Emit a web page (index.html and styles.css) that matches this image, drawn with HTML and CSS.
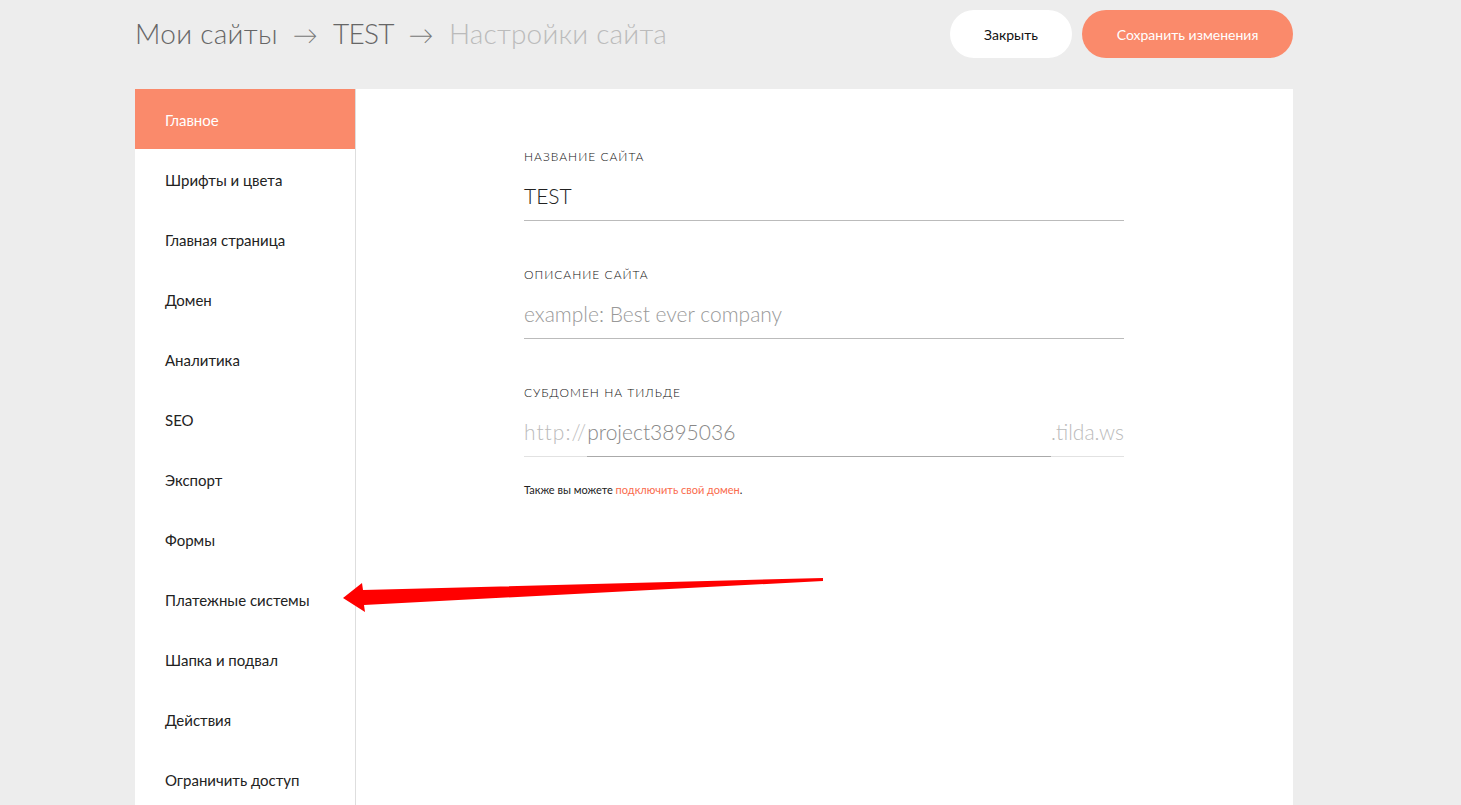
FILE: index.html
```html
<!DOCTYPE html>
<html lang="ru">
<head>
    <meta charset="UTF-8">
    <meta name="viewport" content="width=device-width, initial-scale=1.0">
    <title>Настройки сайта</title>
    <link rel="stylesheet" href="styles.css">
</head>
<body>
    <div class="page">
        <div class="topbar">
            <div class="crumbs">
                <span class="crumb">Мои сайты</span>
                <span class="sep">&rarr;</span>
                <span class="crumb project">TEST</span>
                <span class="sep">&rarr;</span>
                <span class="crumb current">Настройки сайта</span>
            </div>
            <div class="actions">
                <button class="btn btn-light">Закрыть</button>
                <button class="btn btn-accent">Сохранить изменения</button>
            </div>
        </div>

        <div class="panel">
            <ul class="menu">
                <li class="active">Главное</li>
                <li>Шрифты и цвета</li>
                <li>Главная страница</li>
                <li>Домен</li>
                <li>Аналитика</li>
                <li>SEO</li>
                <li>Экспорт</li>
                <li>Формы</li>
                <li>Платежные системы</li>
                <li>Шапка и подвал</li>
                <li>Действия</li>
                <li>Ограничить доступ</li>
            </ul>

            <div class="content">
                <div class="form">
                    <div class="field">
                        <div class="field-label">Название сайта</div>
                        <div class="field-input">TEST</div>
                    </div>
                    <div class="field">
                        <div class="field-label">Описание сайта</div>
                        <div class="field-input placeholder">example: Best ever company</div>
                    </div>
                    <div class="field">
                        <div class="field-label">Субдомен на Тильде</div>
                        <div class="subdomain">
                            <span class="prefix">http://</span>
                            <span class="sub-value">project3895036</span>
                            <span class="suffix">.tilda.ws</span>
                        </div>
                        <div class="note">Также вы можете <a href="#">подключить свой домен</a>.</div>
                    </div>
                </div>
            </div>
        </div>
    </div>

    <svg class="pointer" width="500" height="40" viewBox="0 0 500 40">
        <polygon points="480,0 480,3 21,27 22,34 0,20 19,5 20,12" fill="#ff0000"/>
    </svg>
</body>
</html>
```

FILE: styles.css
```css
body {
    margin: 0;
    background-color: #ededed;
    font-family: "Lato", "Noto Sans", sans-serif;
    color: #222;
}
.page {
    width: 1158px;
    margin-left: 135px;
}
.topbar {
    display: flex;
    justify-content: space-between;
    align-items: center;
    height: 68px;
    margin-bottom: 21px;
}
.crumbs {
    display: flex;
    align-items: baseline;
    font-size: 28px;
    font-weight: 300;
    letter-spacing: 0.3px;
    color: #666;
    gap: 15px;
    margin-top: -3px;
}
.crumbs .project {
    letter-spacing: -0.8px;
}
.crumbs .current {
    color: #bbb;
    letter-spacing: 0.2px;
}
.sep {
    font-size: 25px;
    color: #777;
}
.actions {
    display: flex;
    gap: 10px;
}
.btn {
    height: 48px;
    border: none;
    border-radius: 24px;
    font-family: inherit;
    font-size: 14px;
    cursor: pointer;
}
.btn-light {
    width: 122px;
    background-color: #fff;
    color: #111;
}
.btn-accent {
    width: 211px;
    background-color: #fa8a6b;
    color: #fff;
}
.panel {
    display: flex;
    background-color: #fff;
    min-height: 720px;
}
.menu {
    list-style: none;
    margin: 0;
    padding: 0;
    width: 220px;
    border-right: 1px solid #dedede;
}
.menu li {
    height: 60px;
    line-height: 62px;
    padding-left: 30px;
    font-size: 15px;
    color: #222;
}
.menu li.active {
    background-color: #fa8a6b;
    color: #fff;
}
.content {
    flex: 1;
    padding: 60px 0 0 168px;
}
.form {
    width: 600px;
}
.field {
    margin-bottom: 46px;
}
.field-label {
    font-size: 12px;
    font-weight: 300;
    letter-spacing: 1px;
    text-transform: uppercase;
    color: #111;
    margin-bottom: 19px;
}
.field-input {
    font-size: 21px;
    font-weight: 300;
    color: #222;
    padding-bottom: 12px;
    border-bottom: 1px solid #bbb;
}
.field-input.placeholder {
    color: #999;
}
.subdomain {
    display: flex;
    font-size: 21px;
    font-weight: 300;
    border-bottom: 1px solid #e2e2e2;
}
.subdomain span {
    padding-bottom: 12px;
}
.prefix,
.suffix {
    color: #bbb;
}
.prefix {
    letter-spacing: 1px;
}
.sub-value {
    flex: 1;
    color: #888;
    border-bottom: 1px solid #aaa;
    margin-bottom: -1px;
}
.note {
    font-size: 11px;
    color: #222;
    margin-top: 26px;
}
.note a {
    color: #fa6b4c;
    text-decoration: none;
}
.pointer {
    position: absolute;
    left: 343px;
    top: 578px;
}
```
